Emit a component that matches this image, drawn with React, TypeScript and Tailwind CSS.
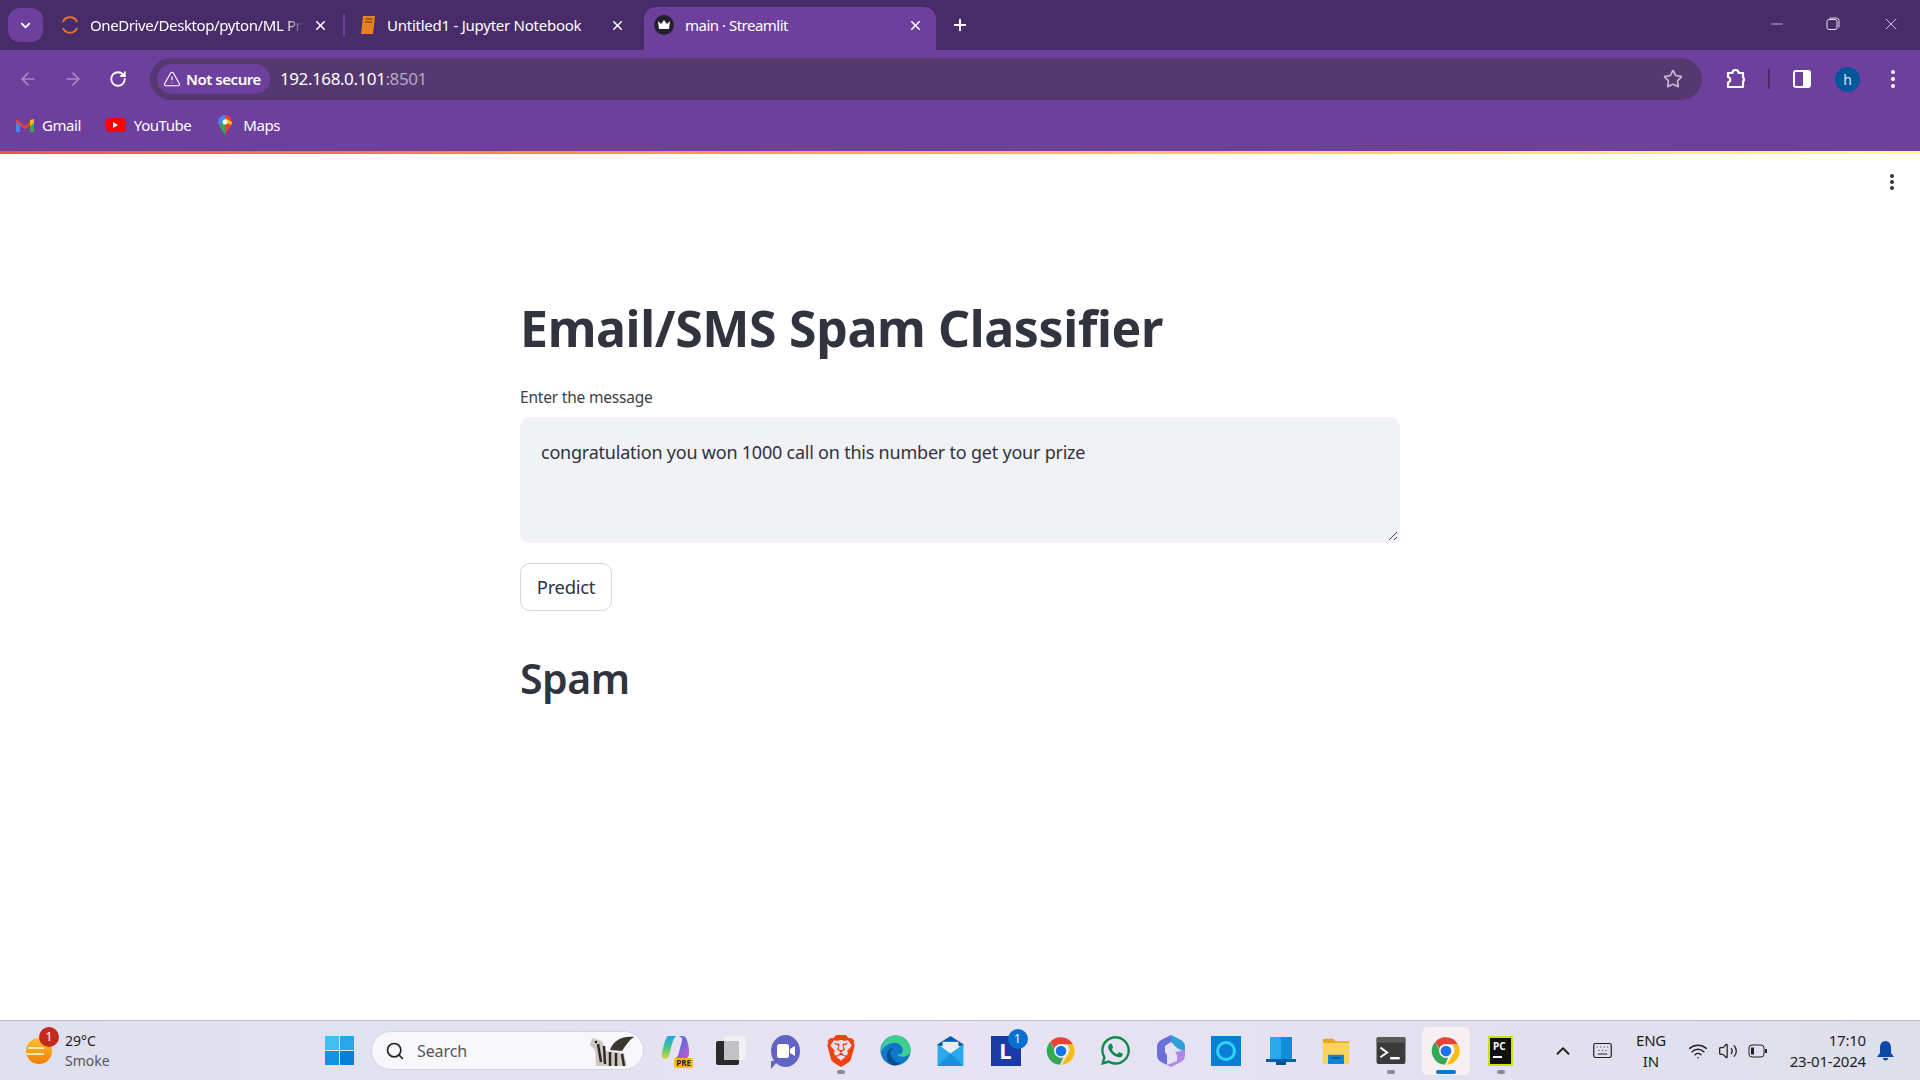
import { ReactNode } from "react";
import { FaWhatsapp } from "react-icons/fa";
import { SiBrave } from "react-icons/si";
import {
  ArrowLeft,
  ArrowRight,
  ChevronDown,
  ChevronUp,
  Keyboard,
  Minus,
  Plus,
  RotateCw,
  Search,
  Star,
  TriangleAlert,
  Volume2,
  Wifi,
  X,
} from "lucide-react";

function ChromeIcon({ size = 30 }: { size?: number }) {
  return (
    <svg width={size} height={size} viewBox="0 0 48 48">
      <path d="M24 2a22 22 0 0 1 19 11H24a11 11 0 0 0-10.4 7.3L6.6 9.6A22 22 0 0 1 24 2z" fill="#ea4335" />
      <path d="M43 13a22 22 0 0 1-17.6 32.9l9.6-16.5A11 11 0 0 0 33.4 13z" fill="#fbbc04" />
      <path d="M6.6 9.6l9.6 16.6a11 11 0 0 0 12.4 5.8l-6.2 13.9A22 22 0 0 1 6.6 9.6z" fill="#34a853" />
      <circle cx="24" cy="24" r="11" fill="#fff" />
      <circle cx="24" cy="24" r="8.6" fill="#1a73e8" />
    </svg>
  );
}

function TaskIcon({ children, running, active }: { children: ReactNode; running?: boolean; active?: boolean }) {
  return (
    <div className="relative flex h-[48px] w-[55px] shrink-0 items-center justify-center">
      {active && <div className="absolute left-[4px] top-0 h-[48px] w-[48px] rounded-[5px] bg-[#f7f0f2]" />}
      <div className="relative flex items-center justify-center">{children}</div>
      {running && <div className="absolute bottom-[1px] left-[24px] h-[4px] w-[8px] rounded-full bg-[#8a8a92]" />}
      {active && <div className="absolute bottom-[1px] left-[18px] h-[4px] w-[20px] rounded-full bg-[#0078d4]" />}
    </div>
  );
}

export default function App() {
  return (
    <div className="flex h-[1080px] w-[1920px] flex-col overflow-hidden bg-white font-['Noto_Sans',sans-serif]">
      {/* tab strip */}
      <div className="flex h-[50px] items-end bg-[#472c69] text-[15px] text-white">
        <div className="mb-[8px] ml-[8px] flex h-[34px] w-[35px] items-center justify-center rounded-[12px] bg-[#6d409e]">
          <ChevronDown size={15} strokeWidth={3} />
        </div>
        <div className="mb-[8px] ml-[9px] flex h-[34px] w-[291px] items-center pl-[8px] pr-[13px]">
          <svg width="20" height="20" viewBox="0 0 20 20" fill="none" stroke="#e8762b" strokeWidth="2">
            <path d="M3 7a7.500 7.500 0 0 1 14 0" />
            <path d="M3 13a7.500 7.500 0 0 0 14 0" />
          </svg>
          <span className="ml-[10px] w-[222px] whitespace-nowrap tracking-[-0.4px] [mask-image:linear-gradient(90deg,#000_88%,transparent_96%)]">
            OneDrive/Desktop/pyton/ML Pr
          </span>
          <X size={15} strokeWidth={2.5} className="ml-[1px]" />
        </div>
        <div className="mb-[14px] h-[22px] w-[2px] bg-[#6d409e]" />
        <div className="mb-[8px] flex h-[34px] w-[299px] items-center pl-[14px] pr-[5px]">
          <svg width="18" height="20" viewBox="0 0 18 20">
            <path d="M4 1h12l-2 18H2z" fill="#e8811f" />
            <path d="M6.500 4h7M6 7h7" stroke="#8a4a10" strokeWidth="1.5" />
          </svg>
          <span className="ml-[10px] w-[223px] whitespace-nowrap tracking-[-0.25px]">Untitled1 - Jupyter Notebook</span>
          <X size={15} strokeWidth={2.5} />
        </div>
        <div className="flex h-[43px] w-[292px] items-center rounded-t-[12px] bg-[#6d409e] pb-[7px] pl-[10px] pr-[13px]">
          <div className="flex h-[20px] w-[20px] items-center justify-center rounded-full bg-[#22202a]">
            <svg width="14" height="12" viewBox="0 0 14 12">
              <path d="M1 2l3 3 3-4 3 4 3-3-1 8H2z" fill="#fff" />
            </svg>
          </div>
          <span className="ml-[11px] flex-1 tracking-[-0.5px]">main · Streamlit</span>
          <X size={15} strokeWidth={2.5} />
        </div>
        <Plus size={18} strokeWidth={2.5} className="mb-[16px] ml-[15px]" />
        <div className="mb-[16px] ml-auto flex items-center text-[#e8e4ee]">
          <Minus size={18} strokeWidth={1} className="mr-[40px]" />
          <svg width="14" height="14" viewBox="0 0 14 14" fill="none" stroke="currentColor" className="mr-[41px]">
            <rect x="1" y="2.500" width="10" height="10" rx="2" />
            <path d="M3.500 1h7a2.500 2.500 0 0 1 2.500 2.500v7" />
          </svg>
          <X size={20} strokeWidth={1} className="mr-[19px]" />
        </div>
      </div>

      {/* address bar */}
      <div className="flex h-[50px] items-center bg-[#6d409e] pt-[8px] text-white">
        <ArrowLeft size={20} className="ml-[18px] text-[#a58cc2]" />
        <ArrowRight size={20} className="ml-[25px] text-[#a58cc2]" />
        <RotateCw size={18} strokeWidth={2.4} className="ml-[26px]" />
        <div className="ml-[23px] flex h-[42px] w-[1552px] items-center rounded-full bg-[#55386f] pl-[7px] pr-[19px]">
          <div className="flex h-[30px] w-[113px] items-center rounded-full bg-[#6d409e] pl-[6px] text-[15px] font-semibold tracking-[-0.45px]">
            <TriangleAlert size={18} strokeWidth={1.5} className="mr-[5px]" />
            Not secure
          </div>
          <span className="ml-[10px] text-[17px] tracking-[-0.42px]">
            192.168.0.101<span className="text-[#b7a8c6]">:8501</span>
          </span>
          <Star size={20} strokeWidth={2} className="ml-auto text-[#c4bccd]" />
        </div>
        <svg width="22" height="22" viewBox="0 0 22 22" fill="none" stroke="#fff" strokeWidth="2.2" className="ml-[23px]">
          <path d="M3 5h4.500a3 3 0 0 1 6 0H18v4.500a2.400 2.400 0 0 1 0 4V19H3v-4.500a2.800 2.800 0 0 0 0-5.500z" strokeLinejoin="round" />
        </svg>
        <div className="ml-[21px] h-[20px] w-[2px] bg-[#472c69]" />
        <svg width="18" height="18" viewBox="0 0 18 18" className="ml-[23px]">
          <rect x="1" y="1" width="16" height="16" rx="2" fill="none" stroke="#fff" strokeWidth="2" />
          <rect x="10" y="1" width="7" height="16" fill="#fff" />
        </svg>
        <div className="ml-[24px] flex h-[25px] w-[25px] items-center justify-center rounded-full bg-[#00559b] text-[14px] text-[#dbe8f5]">
          h
        </div>
        <div className="ml-[31px] flex flex-col gap-[3px]">
          <div className="h-[4px] w-[4px] rounded-full bg-white" />
          <div className="h-[4px] w-[4px] rounded-full bg-white" />
          <div className="h-[4px] w-[4px] rounded-full bg-white" />
        </div>
      </div>

      {/* bookmarks */}
      <div className="flex h-[51px] items-center bg-[#6d409e] pb-[1px] pl-[16px] text-[15px] tracking-[-0.45px] text-white">
        <svg width="18" height="14" viewBox="0 0 18 14">
          <path d="M0 3v11h4V6z" fill="#4285f4" />
          <path d="M18 3v11h-4V6z" fill="#34a853" />
          <path d="M0 1l9 7 9-7v3.500L9 11 0 4.500z" fill="#ea4335" />
          <path d="M14 2l4-1v4l-4 3z" fill="#fbbc04" />
        </svg>
        <span className="ml-[8px]">Gmail</span>
        <div className="ml-[25px] flex h-[14px] w-[20px] items-center justify-center rounded-[4px] bg-[#f00]">
          <div className="h-0 w-0 border-y-[3px] border-l-[5px] border-y-transparent border-l-white" />
        </div>
        <span className="ml-[8px]">YouTube</span>
        <svg width="14" height="20" viewBox="0 0 14 20" className="ml-[27px]">
          <path d="M7 0a7 7 0 0 1 7 7c0 4-4 7-7 13z" fill="#ea4335" />
          <path d="M7 0a7 7 0 0 0-7 7c0 1 .3 2 .8 3L7 7z" fill="#4285f4" />
          <path d="M.8 10C2 13 5 16 7 20V7z" fill="#34a853" />
          <path d="M14 7c0 1-.3 2-.8 3L7 7V3z" fill="#fbbc04" />
          <circle cx="7" cy="7" r="2.500" fill="#fff" />
        </svg>
        <span className="ml-[11px]">Maps</span>
      </div>
      <div className="h-[3px] bg-gradient-to-r from-[#ff4b4b] to-[#fffd80]" />

      {/* page */}
      <main className="relative flex-1 bg-white text-[#31333f]">
        <div className="absolute right-[26px] top-[20px] flex flex-col gap-[2px]">
          <div className="h-[4px] w-[4px] rounded-full bg-[#31333f]" />
          <div className="h-[4px] w-[4px] rounded-full bg-[#31333f]" />
          <div className="h-[4px] w-[4px] rounded-full bg-[#31333f]" />
        </div>
        <div className="mx-auto w-[880px] pt-[139px]">
          <h1 className="h-[70px] text-[50px] font-bold leading-[70px] tracking-[-0.36px]">Email/SMS Spam Classifier</h1>
          <p className="mt-[22px] h-[24px] text-[15.5px] leading-[24px] tracking-[-0.2px] text-[#3d3f4b]">Enter the message</p>
          <div className="relative mt-[8px] h-[126px] rounded-[10px] bg-[#f0f2f6] px-[21px] pt-[20px] text-[18px] leading-[30px] tracking-[-0.22px]">
            congratulation you won 1000 call on this number to get your prize
            <svg width="10" height="10" viewBox="0 0 10 10" className="absolute bottom-[2px] right-[2px]" stroke="#444" fill="none">
              <path d="M1 9l8-8M6 9l3-3" />
            </svg>
          </div>
          <button className="mt-[20px] h-[48px] w-[92px] rounded-[10px] border border-[#d5d6da] bg-white text-[18.5px] tracking-[-0.3px]">
            Predict
          </button>
          <h2 className="mt-[39px] text-[41px] font-semibold leading-[56px] tracking-[-0.5px]">Spam</h2>
        </div>
      </main>

      {/* windows taskbar */}
      <div className="flex h-[60px] items-center border-t border-[#bdbccb] bg-gradient-to-r from-[#dfe0ee] via-[#e7e3f3] to-[#dfdfec] text-[#1c1c1c]">
        <div className="relative ml-[26px] h-[26px] w-[26px] overflow-hidden rounded-full bg-gradient-to-b from-[#fbc02d] to-[#f57c00]">
          <div className="ml-[2px] mt-[9px] h-[2px] w-[16px] bg-[#fde9b0]" />
          <div className="mt-[4px] h-[2px] w-[18px] bg-[#fde9b0]" />
        </div>
        <div className="z-10 -ml-[13px] -mt-[27px] flex h-[20px] w-[20px] items-center justify-center rounded-full bg-[#c42b1c] text-[13px] text-white">
          1
        </div>
        <div className="flex w-[266px] flex-col pl-[6px] text-[14px] leading-[20px]">
          <span>29°C</span>
          <span className="text-[#555]">Smoke</span>
        </div>
        <div className="grid h-[29px] w-[29px] grid-cols-2 gap-[1px]">
          <div className="bg-[#43bdf2]" />
          <div className="bg-[#2aa5ec]" />
          <div className="bg-[#1493e4]" />
          <div className="bg-[#0a7fd8]" />
        </div>
        <div className="ml-[17px] flex h-[39px] w-[273px] items-center rounded-full border border-[#d4d3e4] bg-[#f8f7fc] pl-[13px]">
          <Search size={20} strokeWidth={2} className="text-[#222]" />
          <span className="ml-[12px] text-[16px] tracking-[-0.1px] text-[#555]">Search</span>
          <svg width="60" height="38" viewBox="0 0 52 38" className="ml-auto mr-[3px]">
            <path d="M8 6l10 3 4 10 18 2 3 13H12l-1-16-5-5z" fill="#cfc9c2" />
            <path d="M14 12l3 18M20 14l1 18M26 20v14M32 21v13M38 22l2 12" stroke="#2c2a28" strokeWidth="2.5" />
            <path d="M26 18C30 8 38 4 50 5c-5 3-8 8-12 14z" fill="#3b3531" />
            <circle cx="12" cy="10" r="1.200" fill="#111" />
          </svg>
        </div>

        <div className="ml-[4px] flex items-center">
          <TaskIcon>
            <div className="relative h-[34px] w-[29px]">
              <svg width="29" height="30" viewBox="0 0 29 30">
                <defs>
                  <linearGradient id="cpA" x1="0" y1="0" x2="0" y2="1">
                    <stop offset="0" stopColor="#1fa4e8" />
                    <stop offset="0.5" stopColor="#45c58a" />
                    <stop offset="1" stopColor="#e8d43a" />
                  </linearGradient>
                  <linearGradient id="cpB" x1="0" y1="0" x2="1" y2="1">
                    <stop offset="0" stopColor="#2b6fe0" />
                    <stop offset="1" stopColor="#d05ad0" />
                  </linearGradient>
                </defs>
                <path d="M8 2h8c-3 1-4 4-5 8l-3 12c-.5 2-2 3-4 3C1 25 0 22 1 18L4 7c1-3 2-5 4-5z" fill="url(#cpA)" />
                <path d="M18 2h3c4 0 5 3 6 8 1 4 2 10 0 13-1 2-3 2-5 2h-9c3-1 4-3 5-7l3-11c.5-2 0-4-3-5z" fill="url(#cpB)" />
              </svg>
              <div className="absolute bottom-0 right-[-3px] rounded-[2px] bg-[#fdb913] px-[2px] text-[8px] font-bold leading-[10px] text-[#222]">
                PRE
              </div>
            </div>
          </TaskIcon>
          <TaskIcon>
            <div className="relative h-[29px] w-[30px]">
              <div className="absolute right-0 top-0 h-[24px] w-[22px] rounded-[2px] bg-[#f1f0f4]" />
              <div className="absolute bottom-0 left-0 h-[24px] w-[23px] rounded-[2px] bg-[#2a2a2a]" />
              <div className="absolute right-[7px] top-[5px] h-[19px] w-[15px] bg-[#c2c2c5]" />
            </div>
          </TaskIcon>
          <TaskIcon>
            <div className="relative flex h-[32px] w-[29px] items-center justify-center rounded-[50%] bg-[#6264c4]">
              <svg width="18" height="14" viewBox="0 0 18 14">
                <rect x="0" y="0" width="12" height="14" rx="2.500" fill="#fff" />
                <path d="M13 5l5-3v10l-5-3z" fill="#fff" />
              </svg>
              <div className="absolute bottom-[-2px] left-0 h-0 w-0 border-r-[7px] border-t-[8px] border-r-transparent border-t-[#6264c4]" />
            </div>
          </TaskIcon>
          <TaskIcon running>
            <SiBrave size={32} className="text-[#f1420f]" />
          </TaskIcon>
          <TaskIcon>
            <svg width="31" height="31" viewBox="0 0 32 32">
              <circle cx="16" cy="16" r="15.500" fill="#0f78c9" />
              <path d="M16 .5C25 .5 31.500 7 31.500 15c0 5-4 7.500-8 7.500-3 0-5-1-6-2 4 0 6-2 6-4.500C23.500 11 19 8 15 8 9 8 4 12 1 17 1 8 7 .5 16 .5z" fill="#3ccf91" />
              <path d="M14 13c-3 2-4 6-2 10 2 4 6 6 10 6-3 2-5 2.500-7 2.500-6 0-8-6-8-10 0-4 3-8 7-8.500z" fill="#0a4f8f" />
            </svg>
          </TaskIcon>
          <TaskIcon>
            <svg width="31" height="30" viewBox="0 0 31 36">
              <path d="M15.500 0L31 10v2H0v-2z" fill="#0a5eb0" />
              <path d="M6 7h19v12H6z" fill="#e9eef5" />
              <path d="M0 10l15.500 11L31 10v26H0z" fill="#27a9ec" />
              <path d="M0 36l15.500-15L31 36z" fill="#1b8fdd" />
            </svg>
          </TaskIcon>
          <TaskIcon>
            <div className="relative flex h-[30px] w-[30px] items-center justify-center bg-[#1b3aa6] text-[22px] font-bold text-white">
              L
              <div className="absolute -right-[7px] -top-[7px] flex h-[20px] w-[20px] items-center justify-center rounded-full bg-[#0a6fd1] text-[12px] font-normal">
                1
              </div>
            </div>
          </TaskIcon>
          <TaskIcon>
            <ChromeIcon />
          </TaskIcon>
          <TaskIcon>
            <FaWhatsapp size={33} className="text-[#12894c]" />
          </TaskIcon>
          <TaskIcon>
            <svg width="28" height="32" viewBox="0 0 28 32">
              <path d="M14 0L4 5c-3 2-4 4-4 7v8c0 3 1 5 4 7l6 3V20l-2-3v-6l6-4z" fill="#6d6fd8" />
              <path d="M14 0l10 5c3 2 4 4 4 7v5l-8-4-6-6z" fill="#2f9fd8" />
              <path d="M28 15v5c0 3-1 5-4 7l-10 5-4-2 10-4v-6l-2-3z" fill="#b08ae2" />
            </svg>
          </TaskIcon>
          <TaskIcon>
            <div className="flex h-[30px] w-[30px] items-center justify-center bg-[#0a7ed4]">
              <div className="h-[20px] w-[20px] rounded-full border-[3px] border-[#2fd3f5]" />
            </div>
          </TaskIcon>
          <TaskIcon>
            <svg width="30" height="30" viewBox="0 0 30 30">
              <rect x="4" y="1" width="22" height="22" fill="#0e8ed8" />
              <rect x="4" y="1" width="11" height="22" fill="#27a9ec" />
              <path d="M0 23h30v3H0z" fill="#0a5eb0" />
              <rect x="10" y="26" width="10" height="3" fill="#0a4f8f" />
            </svg>
          </TaskIcon>
          <TaskIcon>
            <svg width="30" height="27" viewBox="0 0 31 32">
              <path d="M0 2h12l3 3h16v27H0z" fill="#e6a817" />
              <path d="M0 7h31v25H0z" fill="#fcd45c" />
              <rect x="6" y="21" width="19" height="11" rx="1" fill="#0d85d6" />
              <rect x="10" y="24" width="11" height="1.500" fill="#033f72" />
            </svg>
          </TaskIcon>
          <TaskIcon running>
            <svg width="30" height="27" viewBox="0 0 30 28">
              <rect width="30" height="28" rx="2" fill="#3a3a3a" />
              <rect width="30" height="6" rx="2" fill="#5a5a5a" />
              <path d="M4 11l7 5-7 5" fill="none" stroke="#fff" strokeWidth="2" />
              <path d="M14 22h10" stroke="#fff" strokeWidth="2.500" />
            </svg>
          </TaskIcon>
          <TaskIcon active>
            <ChromeIcon />
          </TaskIcon>
          <TaskIcon running>
            <div className="flex h-[30px] w-[25px] flex-col items-start border-2 border-[#c8e600] bg-[#111] pl-[3px] pt-[2px] text-[10px] font-bold leading-[12px] text-white">
              PC
              <div className="mt-[4px] h-[2px] w-[9px] bg-white" />
            </div>
          </TaskIcon>
        </div>

        <ChevronUp size={22} strokeWidth={2} className="ml-[24px] text-[#222]" />
        <Keyboard size={21} strokeWidth={1.4} className="ml-[18px] text-[#222]" />
        <div className="ml-[22px] flex w-[32px] flex-col items-center text-[15px] leading-[21px]">
          <span className="tracking-[-0.3px]">ENG</span>
          <span>IN</span>
        </div>
        <Wifi size={20} strokeWidth={1.8} className="ml-[21px] text-[#222]" />
        <Volume2 size={20} strokeWidth={1.5} className="ml-[10px] text-[#222]" />
        <svg width="20" height="14" viewBox="0 0 20 14" fill="none" stroke="#222" className="ml-[10px]">
          <rect x="1" y="1" width="15" height="12" rx="3" />
          <rect x="3" y="3.500" width="3" height="7" fill="#222" stroke="none" />
          <path d="M18 5v4" strokeWidth="2" />
        </svg>
        <div className="ml-[10px] flex w-[88px] flex-col items-end text-[15px] leading-[21px] tracking-[-0.2px]">
          <span>17:10</span>
          <span className="whitespace-nowrap">23-01-2024</span>
        </div>
        <svg width="17" height="20" viewBox="0 0 17 20" className="ml-[11px]">
          <path d="M8.500 0C12 0 14 3 14 7v5l3 4H0l3-4V7c0-4 2-7 5.500-7z" fill="#0a4aa6" />
          <path d="M6 17h5a2.500 2.500 0 0 1-5 0z" fill="#0a4aa6" />
        </svg>
      </div>
    </div>
  );
}
